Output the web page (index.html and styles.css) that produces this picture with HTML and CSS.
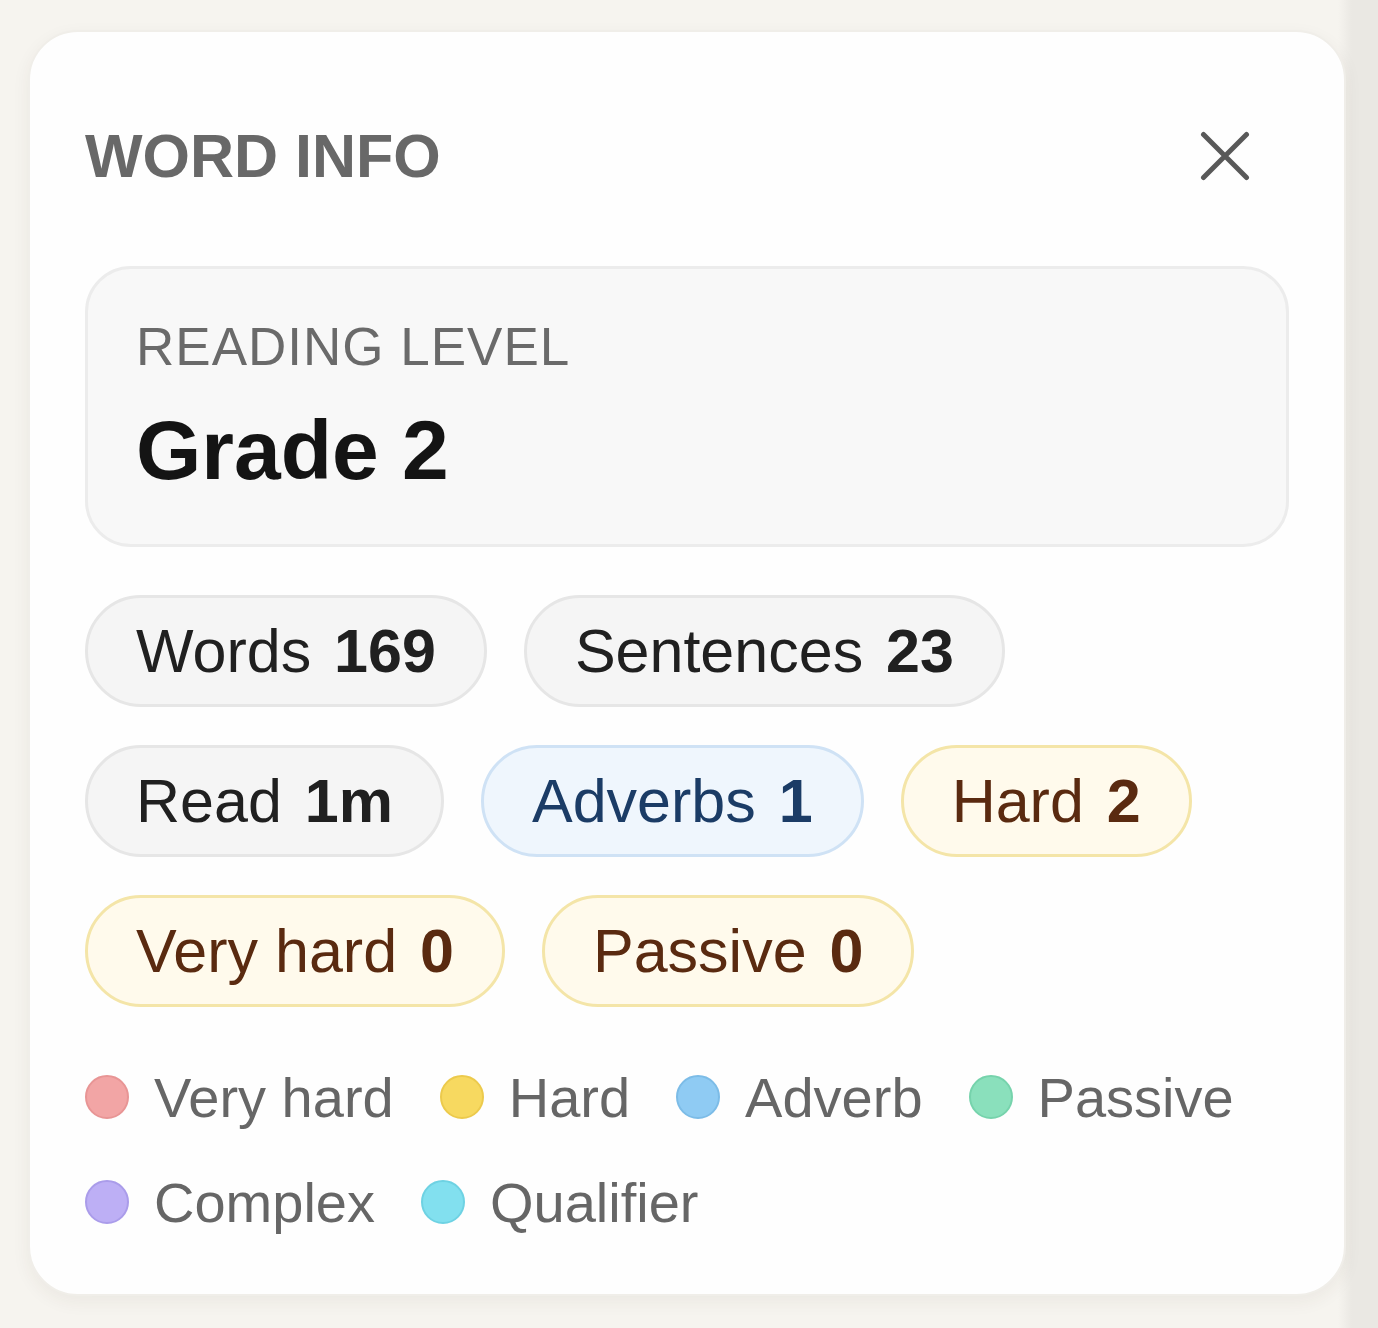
FILE: index.html
```html
<!DOCTYPE html>
<html lang="en">
<head>
<meta charset="utf-8">
<title>Word Info</title>
<link rel="stylesheet" href="styles.css">
</head>
<body>
<div class="card">
  <div class="header">
    <h1 class="title">WORD INFO</h1>
    <button class="close" aria-label="Close">
      <svg width="50" height="50" viewBox="0 0 50 50"><path d="M3.5 3.5 L46.5 46.5 M46.5 3.5 L3.5 46.5" stroke="#595959" stroke-width="5" stroke-linecap="round" fill="none"/></svg>
    </button>
  </div>
  <div class="level">
    <div class="level-label">READING LEVEL</div>
    <div class="level-value">Grade 2</div>
  </div>
  <div class="pills">
    <span class="pill neutral">Words <b>169</b></span>
    <span class="pill neutral">Sentences <b>23</b></span>
    <span class="pill neutral">Read <b>1m</b></span>
    <span class="pill blue">Adverbs <b>1</b></span>
    <span class="pill yellow">Hard <b>2</b></span>
    <span class="pill yellow">Very hard <b>0</b></span>
    <span class="pill yellow">Passive <b>0</b></span>
  </div>
  <div class="legend">
    <span class="key"><i class="dot red"></i>Very hard</span>
    <span class="key"><i class="dot yel"></i>Hard</span>
    <span class="key"><i class="dot blu"></i>Adverb</span>
    <span class="key"><i class="dot grn"></i>Passive</span>
    <span class="key"><i class="dot pur"></i>Complex</span>
    <span class="key"><i class="dot cyn"></i>Qualifier</span>
  </div>
</div>
</body>
</html>
```
FILE: styles.css
```css
* { box-sizing: border-box; }
html, body { margin: 0; padding: 0; }
body {
  width: 1378px;
  height: 1328px;
  overflow: hidden;
  background: linear-gradient(to right, #f6f4ef 0, #f6f4ef 1338px, #eae8e3 1352px, #eae8e3 100%);
  font-family: "Liberation Sans", Arial, Helvetica, sans-serif;
  padding: 30px 0 0 28px;
}
.card {
  width: 1318px;
  height: 1266px;
  background: #fefefe;
  border-radius: 50px;
  border: 2px solid #f0eee9;
  box-shadow: 0 6px 18px rgba(60, 50, 30, 0.06);
  padding: 84px 55px 0 55px;
}
.header {
  display: flex;
  align-items: center;
  justify-content: space-between;
  height: 80px;
}
.title {
  margin: 0;
  font-size: 61px;
  font-weight: 700;
  color: #686868;
  line-height: 1;
}
.close {
  border: 0;
  background: none;
  padding: 0;
  margin-right: 39px;
  width: 50px;
  height: 50px;
  display: flex;
}
.level {
  margin-top: 70px;
  height: 281px;
  border: 3px solid #ececec;
  background: #f8f8f8;
  border-radius: 46px;
  padding: 38px 48px 0 48px;
}
.level-label {
  font-size: 53px;
  color: #6a6a6a;
  letter-spacing: 1px;
  line-height: 80px;
}
.level-value {
  font-size: 84px;
  font-weight: 700;
  color: #141414;
  line-height: 100px;
  margin-top: 13px;
}
.pills {
  display: flex;
  flex-wrap: wrap;
  gap: 38px 37px;
  margin-top: 48px;
}
.pill {
  display: inline-flex;
  align-items: center;
  height: 112px;
  padding: 0 48px;
  border-radius: 56px;
  border: 3px solid;
  font-size: 61px;
  line-height: 1;
  white-space: pre;
}
.pill b { font-weight: 700; margin-left: 6px; }
.neutral { background: #f5f5f5; border-color: #e6e6e6; color: #202020; }
.blue { background: #eff6fd; border-color: #cfe2f5; color: #1b3c66; }
.yellow { background: #fffaec; border-color: #f4e5a8; color: #5a2a10; }
.legend {
  display: flex;
  flex-wrap: wrap;
  gap: 25px 46px;
  margin-top: 50px;
}
.key {
  display: inline-flex;
  align-items: center;
  height: 80px;
  font-size: 56px;
  color: #666;
}
.dot {
  width: 44px;
  height: 44px;
  border-radius: 50%;
  border: 2px solid;
  margin-right: 25px;
}
.red { background: #f2a5a5; border-color: #e89595; }
.yel { background: #f7d960; border-color: #ecca4c; }
.blu { background: #8fcbf3; border-color: #7cbce7; }
.grn { background: #8ae0bc; border-color: #76d3ac; }
.pur { background: #bdaff5; border-color: #aa9cea; }
.cyn { background: #82e0ef; border-color: #6ed2e3; }
```
